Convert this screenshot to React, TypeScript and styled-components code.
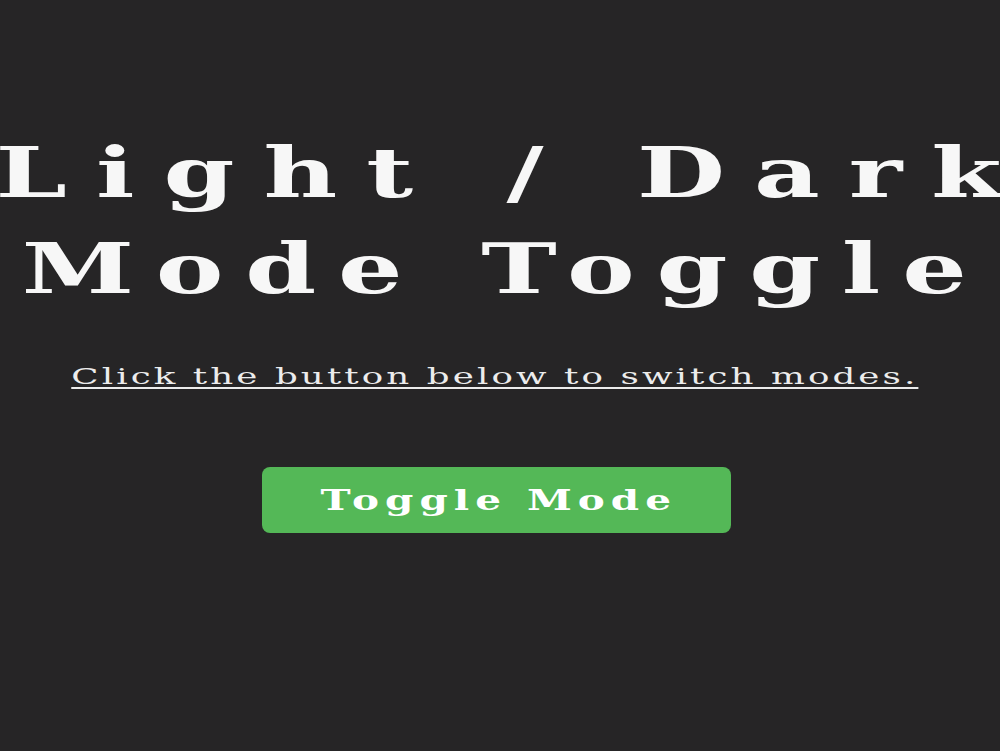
import React, { useState } from 'react';
import styled, { createGlobalStyle } from 'styled-components';

const GlobalStyle = createGlobalStyle<{ dark: boolean }>`
  html, body {
    margin: 0;
    padding: 0;
    height: 100%;
    overflow: hidden;
    background-color: ${(props) => (props.dark ? '#262526' : '#f4f4f4')};
  }

  #root {
    height: 100%;
  }
`;

const Page = styled.main<{ dark: boolean }>`
  height: 100%;
  display: flex;
  flex-direction: column;
  align-items: center;
  padding-top: 125px;
  box-sizing: border-box;
  color: ${(props) => (props.dark ? '#f7f7f7' : '#222')};
  overflow: hidden;
`;

const Title = styled.h1`
  margin: 0;
  width: 100%;
  flex-shrink: 0;
  text-align: center;
  font-family: 'DejaVu Serif', 'Liberation Serif', serif;
  font-weight: 700;
  font-size: 70px;
  line-height: 96px;
  transform: scaleX(1.45);
`;

const TitleLine = styled.span<{ spacing: number; indent: number }>`
  display: block;
  white-space: nowrap;
  letter-spacing: ${(props) => props.spacing}px;
  padding-left: ${(props) => props.indent}px;
`;

const Subtitle = styled.p<{ dark: boolean }>`
  margin: 44px 14px 0 0;
  padding-left: 2px;
  white-space: nowrap;
  color: ${(props) => (props.dark ? '#ececec' : '#333')};
  font-family: 'DejaVu Serif', 'Liberation Serif', serif;
  font-size: 23px;
  line-height: 30px;
  letter-spacing: 2px;
  text-decoration: underline;
  text-underline-offset: 3px;
  text-decoration-thickness: 1.5px;
  transform: scaleX(1.55);
`;

const ToggleButton = styled.button`
  margin: 76px 8px 0 0;
  width: 469px;
  height: 66px;
  padding: 0;
  border: none;
  border-radius: 8px;
  background-color: #54b857;
  color: #ffffff;
  cursor: pointer;

  &:hover {
    background-color: #48a84b;
  }
`;

const ButtonLabel = styled.span`
  display: inline-block;
  padding-left: 4px;
  font-family: 'DejaVu Serif', 'Liberation Serif', serif;
  font-weight: 700;
  font-size: 27px;
  letter-spacing: 4px;
  transform: scaleX(1.5);
`;

const App: React.FC = () => {
  const [dark, setDark] = useState(true);

  return (
    <>
      <GlobalStyle dark={dark} />
      <Page dark={dark}>
        <Title>
          <TitleLine spacing={20} indent={18}>Light / Dark</TitleLine>
          <TitleLine spacing={15} indent={7}>Mode Toggle</TitleLine>
        </Title>
        <Subtitle dark={dark}>Click the button below to switch modes.</Subtitle>
        <ToggleButton type="button" onClick={() => setDark((d) => !d)}>
          <ButtonLabel>Toggle Mode</ButtonLabel>
        </ToggleButton>
      </Page>
    </>
  );
};

export default App;
